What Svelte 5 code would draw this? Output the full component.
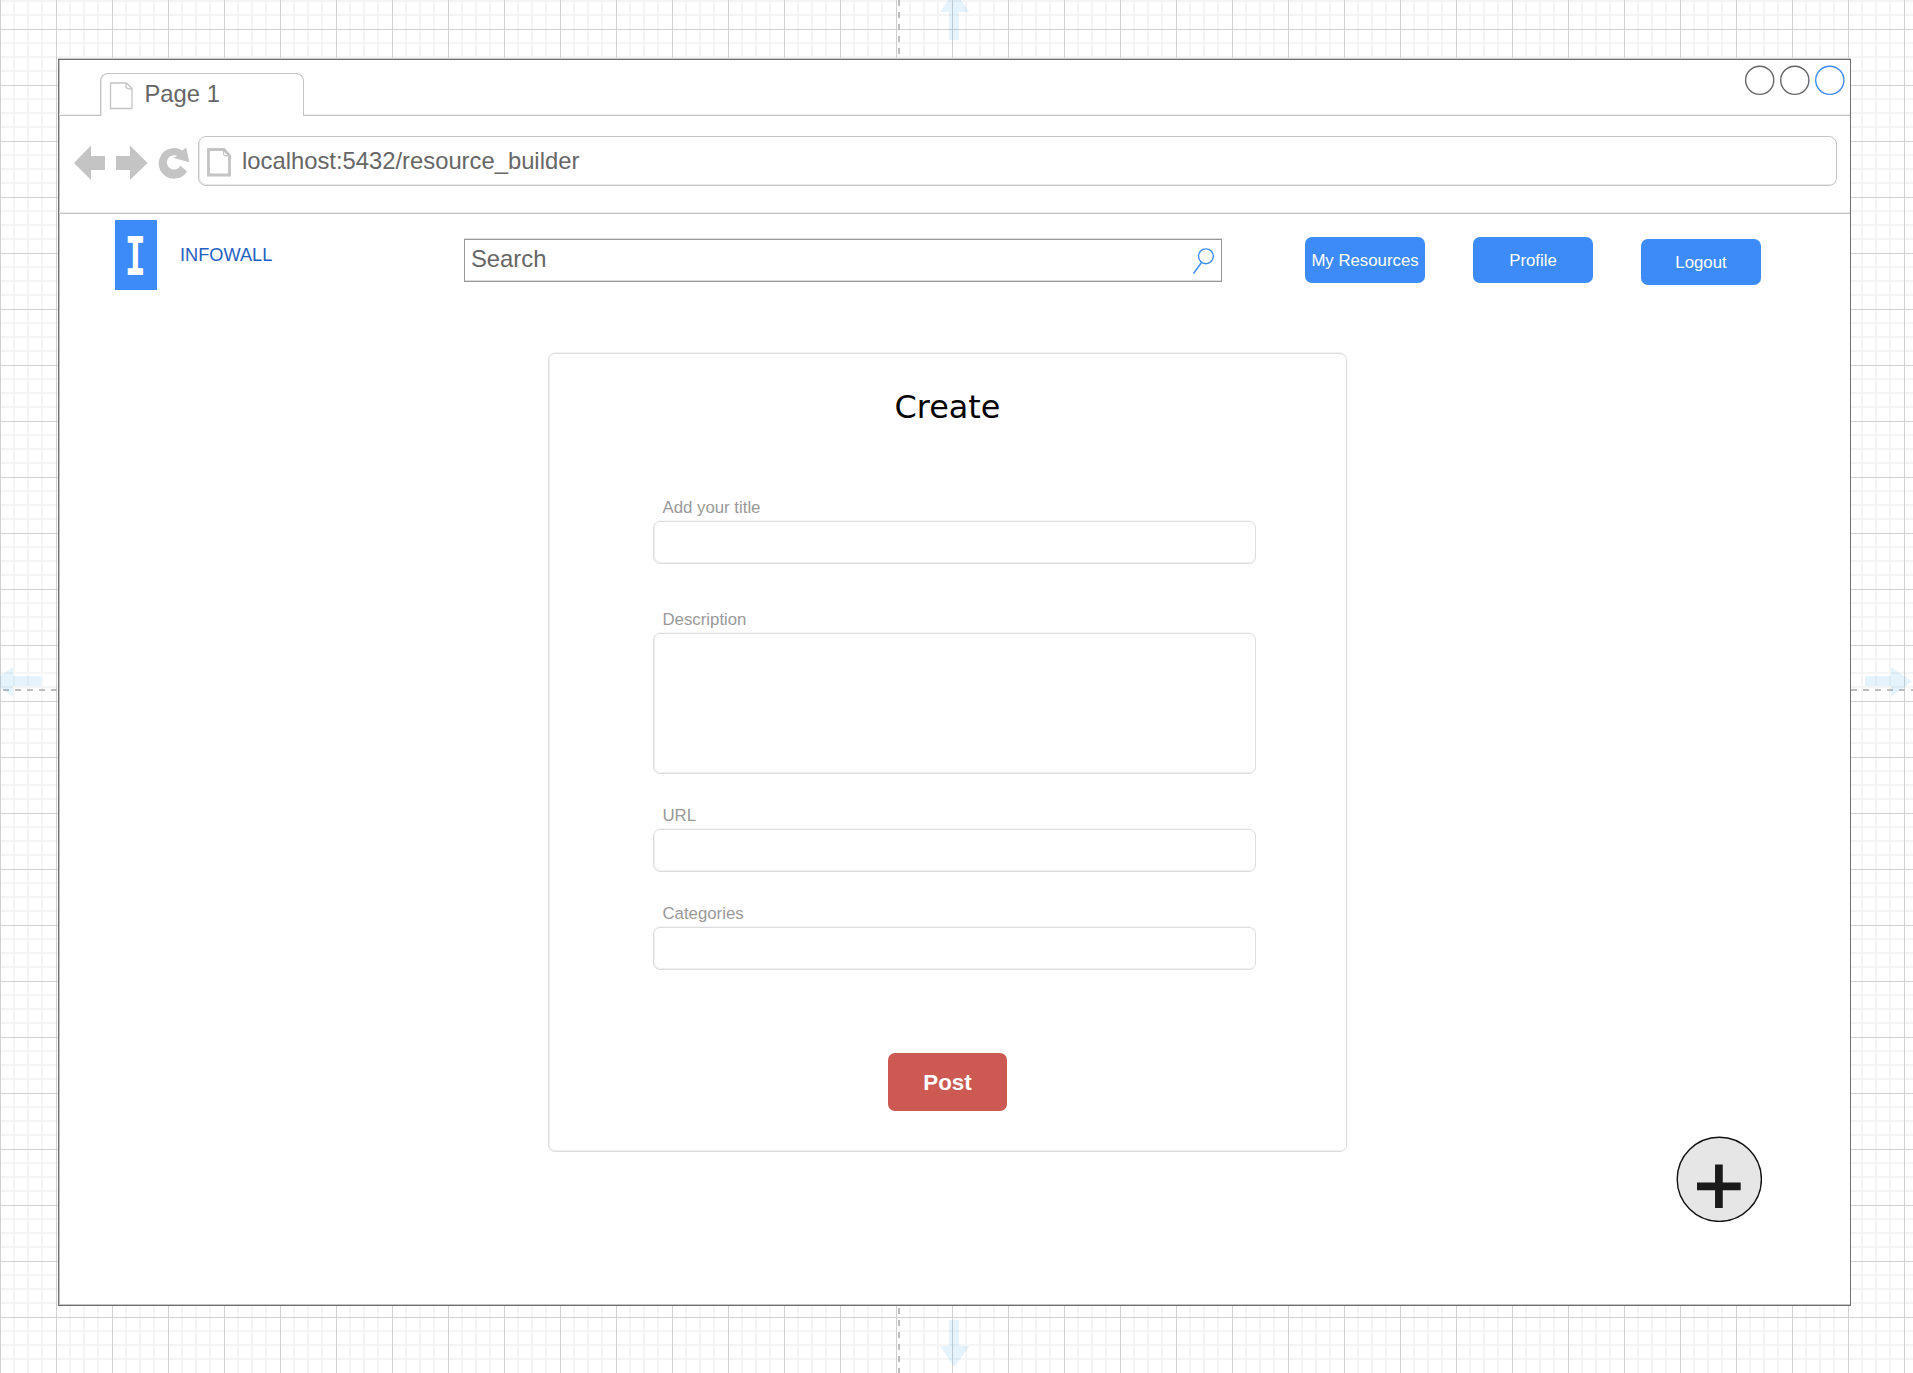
<script>
  const fields = [
    { label: 'Add your title', kind: 'title' },
    { label: 'Description', kind: 'description' },
    { label: 'URL', kind: 'url' },
    { label: 'Categories', kind: 'categories' }
  ];

  const STEP = 56;
  const columns = Array.from({ length: 35 }, (_, i) => i * STEP);
  const rows = Array.from({ length: 26 }, (_, i) => 29 + (i - 1) * STEP);
  const minor = [14, 28, 42];
  const vertical = (x) => `M${x} 0V1373`;
  const horizontal = (y) => `M0 ${y}H1913`;
  const minorPath =
    columns.flatMap((x) => minor.map((m) => vertical(x + m))).join('') +
    rows.flatMap((y) => minor.map((m) => horizontal(y + m))).join('');
  const majorPath =
    columns.map((x) => vertical(x + 0.5)).join('') + rows.map((y) => horizontal(y + 0.5)).join('');
</script>

<div class="canvas">
  <svg class="backdrop" width="1913" height="1373" aria-hidden="true">
    <path d={minorPath} stroke="#f5f5f5" stroke-width="2" />
    <path d={majorPath} stroke="#d0d0d0" />
    <path d="M899 0V1373" stroke="#bdbdbd" stroke-width="2" stroke-dasharray="6" />
    <path d="M3 690H1913" stroke="#bdbdbd" stroke-width="2" stroke-dasharray="6" />
    <g fill="#29a6e8" fill-opacity=".12">
      <path d="M949 40V12H940L954.5-9 969.5 12H959V40Z" />
      <path d="M949 1320V1346H940L954.5 1367 969.5 1346H959V1320Z" />
      <path d="M41 676H13V667L-8 681.500 13 697V686H41Z" />
      <path d="M1865 676H1891V667L1912 681.500 1891 697V686H1865Z" />
    </g>
  </svg>

  <main class="window">
    <div class="tabs">
      <div class="tab">
        <svg width="24" height="28" viewBox="0 0 24 28" fill="none" stroke="#c4c4c4" stroke-width="1.3">
          <path d="M1.500 1H17.500L23 6.500V26.500H1.500ZM17 1V5Q17.500 7 22.500 7" />
        </svg>
        <span>Page 1</span>
      </div>
      <svg class="controls" width="102" height="32" fill="none" stroke="#666" stroke-width="1.400">
        <circle cx="15.700" cy="15.300" r="14.100" />
        <circle cx="50.800" cy="15.300" r="14.100" />
        <circle cx="85.800" cy="15.300" r="14.100" stroke="#3d8bf8" />
      </svg>
    </div>

    <div class="toolbar">
      <svg class="nav" width="120" height="36" fill="#c4c4c4">
        <path d="M0 18 17 .5V11H31V25H17V35Z" />
        <path d="M42 11H56V.5L73.500 18 56 35V25H42Z" />
        <path d="M113 26.500A15.300 15.300 0 1 1 108.300 5.600L112.200 2.500 115.300 17.300 99 12.800 103.500 11A7.200 7.200 0 1 0 106.500 20.700Z" />
      </svg>
      <div class="address">
        <svg width="24" height="29" viewBox="0 0 24 29" fill="none" stroke="#c4c4c4">
          <path d="M1.500 1.500H17L22.500 7.500V27H1.500Z" stroke-width="2.800" />
          <path d="M16.500 2V6Q17 8 22 8" stroke-width="1.200" />
        </svg>
        <span>localhost:5432/resource_builder</span>
      </div>
    </div>

    <header>
      <div class="logo"><span>I</span></div>
      <div class="brand">INFOWALL</div>
      <div class="search">
        <span>Search</span>
        <svg width="24" height="28" fill="none" stroke="#3d8bf8" stroke-width="1.400">
          <circle cx="13.900" cy="9.300" r="7.400" />
          <path d="M9.500 15.500 1.500 26.500" />
        </svg>
      </div>
      <button>My Resources</button>
      <button>Profile</button>
      <button class="logout">Logout</button>
    </header>

    <section class="card">
      <h1>Create</h1>
      <form>
        {#each fields as field}
          <div class="field {field.kind}">
            <span>{field.label}</span>
            <div class="box"></div>
          </div>
        {/each}
      </form>
      <button class="post">Post</button>
    </section>

    <div class="add">
      <svg width="86" height="86">
        <circle cx="43.300" cy="43.300" r="42.100" fill="#e6e6e6" stroke="#111" stroke-width="1.400" />
        <path d="M21 50.300H64.700M42.900 28.400V72.100" stroke="#1a1a1a" stroke-width="7.700" />
      </svg>
    </div>
  </main>
</div>

<style>
  :global(body) {
    margin: 0;
    background: #fff;
  }
  .canvas {
    position: relative;
    box-sizing: border-box;
    width: 1913px;
    height: 1373px;
    padding: 59px 0 0 58px;
    overflow: hidden;
    font-family: 'Liberation Sans', Arial, sans-serif;
    color: #666;
  }
  .backdrop {
    position: absolute;
    inset: 0;
  }
  svg {
    display: block;
    flex: none;
  }
  .window {
    position: relative;
    box-sizing: border-box;
    width: 1793px;
    height: 1247px;
    border: 1px solid #707070;
    box-shadow: 0 -1px #ccc, inset 1px -1px #c4c4c4;
    background: #fff;
  }
  .tabs {
    display: flex;
    justify-content: space-between;
    box-sizing: border-box;
    height: 56px;
    padding: 13px 0 0 41px;
    border-bottom: 1px solid #c4c4c4;
    box-shadow: inset 0 -1px #eee;
  }
  .tab {
    display: flex;
    box-sizing: border-box;
    width: 204px;
    height: 43px;
    padding: 8px 0 0 8px;
    border: 1px solid #c4c4c4;
    border-bottom: 0;
    border-radius: 8px 8px 0 0;
    box-shadow: inset 1px 0 #e8e8e8;
    background: #fff;
    font-size: 23.8px;
    line-height: 28px;
  }
  .tab span {
    margin: -2px 0 0 11.5px;
  }
  .controls {
    margin: -8px 4px 0 0;
  }
  .toolbar {
    display: flex;
    box-sizing: border-box;
    height: 98px;
    padding: 20px 13px 0 15px;
    border-bottom: 1px solid #c4c4c4;
    box-shadow: inset 0 -1px #e8e8e8;
  }
  .nav {
    margin-top: 9px;
  }
  .address {
    display: flex;
    flex: 1;
    box-sizing: border-box;
    height: 50px;
    margin-left: 4px;
    padding: 11px 0 0 8px;
    border: 1px solid #c4c4c4;
    border-radius: 8px;
    box-shadow: inset 1px -1px #e8e8e8;
    font-size: 23.8px;
    line-height: 28px;
  }
  .address span {
    margin: -1px 0 0 11px;
  }
  header {
    display: flex;
    height: 139px;
    padding-left: 56px;
  }
  .logo {
    display: flex;
    align-items: center;
    justify-content: center;
    width: 42px;
    height: 70px;
    margin-top: 6px;
    background: #3d8bf8;
    color: #fff;
    font: bold 54px/70px 'DejaVu Sans Mono', monospace;
  }
  .logo span {
    transform: translate(-1px, 2px) scaleX(0.65);
  }
  .brand {
    width: 284px;
    margin: 30px 0 0 23px;
    color: #1f5fc4;
    font-size: 18.2px;
    line-height: 22px;
  }
  .search {
    display: flex;
    justify-content: space-between;
    box-sizing: border-box;
    width: 758px;
    height: 43px;
    margin-top: 25px;
    padding: 7px 5px 0 6px;
    border: 1px solid #999;
    box-shadow: 0 -1px #ddd, inset 0 -1px #ddd;
    font-size: 23.8px;
    line-height: 28px;
  }
  .search span {
    margin-top: -2px;
  }
  button {
    box-sizing: border-box;
    width: 120px;
    height: 46px;
    padding: 1px 0 0;
    border: 0;
    border-radius: 7px;
    background: #3d8bf8;
    color: #fff;
    font: 16.8px/46px 'Liberation Sans', Arial, sans-serif;
    white-space: nowrap;
  }
  header button {
    margin: 23px 0 0 48px;
  }
  .search + button {
    margin-left: 83px;
  }
  header .logout {
    margin-top: 25px;
  }
  .card {
    box-sizing: border-box;
    display: flex;
    flex-direction: column;
    align-items: center;
    width: 799px;
    height: 799px;
    margin-left: 489px;
    border: 1px solid #ddd;
    border-radius: 7px;
    box-shadow: 0 -1px #f3f3f3, inset 1px -1px #f0f0f0;
  }
  h1 {
    margin: 33px 0 0;
    color: #000;
    font: 31.9px/40px 'DejaVu Sans', Verdana, sans-serif;
  }
  form {
    width: 603px;
    margin: 70px 0 0 13px;
  }
  .field span {
    display: block;
    padding: 0 0 1px 10px;
    color: #999;
    font-size: 16.8px;
    line-height: 23px;
    margin-top: -1px;
    padding-bottom: 2px;
  }
  .box {
    box-sizing: border-box;
    height: 43px;
    border: 1px solid #ddd;
    border-radius: 7px;
    box-shadow: 0 -1px #f6f6f6, inset 1px -1px #f0f0f0;
  }
  .title {
    margin-bottom: 45px;
  }
  .description .box {
    height: 141px;
  }
  .description,
  .url {
    margin-bottom: 31px;
  }
  .post {
    width: 119px;
    height: 58px;
    margin-top: 83px;
    background: #cc5a52;
    font-size: 22.4px;
    font-weight: bold;
    line-height: 58px;
  }
  .add {
    display: flex;
    justify-content: flex-end;
    margin: -16px 88px 0 0;
  }
</style>
